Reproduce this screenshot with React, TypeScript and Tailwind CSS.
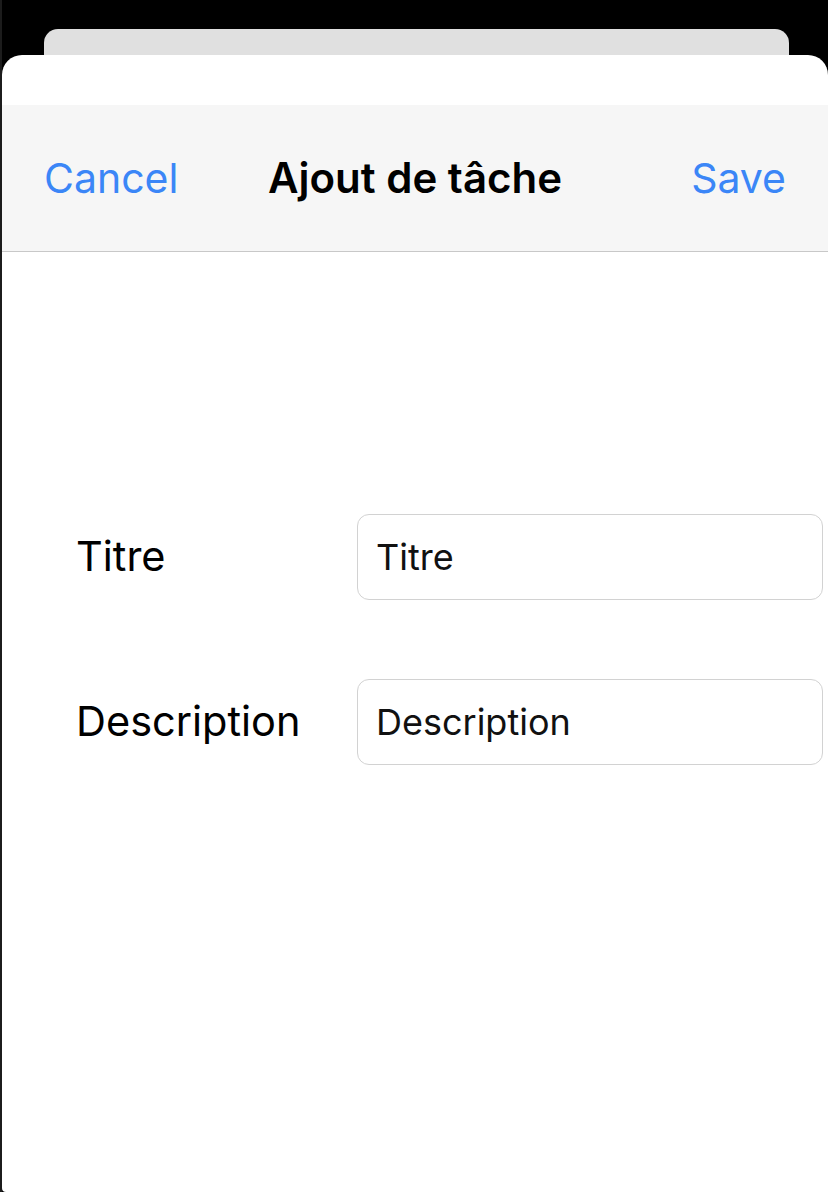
import React from "react";

const font = { fontFamily: "Inter, 'Liberation Sans', sans-serif" };

function Field({ label, placeholder }: { label: string; placeholder: string }) {
  return (
    <div className="flex items-center">
      <label className="w-[355px] shrink-0 pl-[74px] text-[41.5px] text-black leading-none">{label}</label>
      <div className="w-[466px] h-[86px] shrink-0 flex items-center rounded-[12px] border border-[#d2d2d2] bg-white pl-[18px]">
        <span className="text-[36px] text-[#111] leading-none">{placeholder}</span>
      </div>
    </div>
  );
}

export default function App() {
  return (
    <div className="h-[1192px] w-[828px] bg-black flex flex-col overflow-hidden border-l-2 border-[#1c1c1c]" style={font}>
      {/* stacked sheet behind */}
      <div className="mt-[29px] ml-[42px] mr-[39px] h-[26px] shrink-0 bg-[#e0e0e0] rounded-t-[14px]" />

      {/* modal sheet */}
      <div className="flex-1 bg-white rounded-t-[20px] rounded-bl-[4px] flex flex-col">
        <div className="h-[50px] shrink-0" />

        {/* nav bar */}
        <div className="h-[147px] shrink-0 bg-[#f6f6f6] border-b border-[#c8c8c8] grid grid-cols-[1fr_auto_1fr] items-center px-[42px]">
          <span className="text-[41px] text-[#3b86f7] leading-none">Cancel</span>
          <span className="text-[42px] font-semibold text-black leading-none">Ajout de tâche</span>
          <span className="text-[41px] text-[#3b86f7] leading-none justify-self-end">Save</span>
        </div>

        {/* form */}
        <div className="mt-[262px] flex flex-col gap-[79px]">
          <Field label="Titre" placeholder="Titre" />
          <Field label="Description" placeholder="Description" />
        </div>
      </div>
    </div>
  );
}
